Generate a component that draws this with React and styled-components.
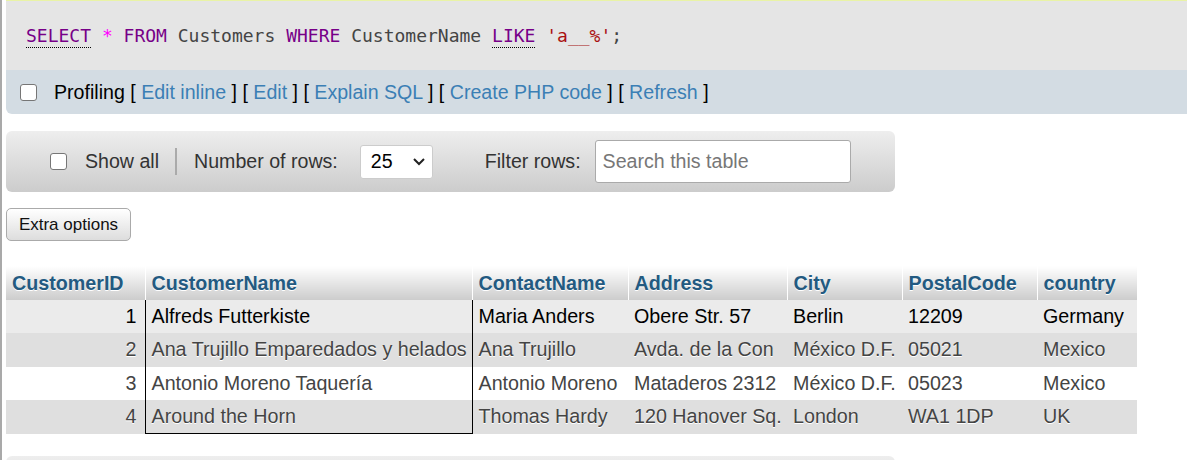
import React from "react";
import styled, { createGlobalStyle } from "styled-components";

const Global = createGlobalStyle`
  html, body { margin: 0; padding: 0; background: #fff; }
  body { font-family: "Liberation Sans", Arial, sans-serif; overflow: hidden; }
`;

const Page = styled.div`
  border-left: 2px solid #a9a9a9;
  padding-left: 4px;
  min-height: 100vh;
  box-sizing: border-box;
`;

const SqlBox = styled.div`
  background: #e5e5e5;
  border-top: 1px solid #e9f3a6;
  height: 69px;
  display: flex;
  align-items: center;
  padding-left: 20px;
  font-family: "DejaVu Sans Mono", monospace;
  font-size: 18px;
  color: #444;
`;

const Code = styled.code`
  font-family: inherit;
  white-space: pre;
`;

const Kw = styled.span`
  color: #770088;
  border-bottom: ${(p) => (p.$dotted ? "1px dotted #000" : "none")};
  padding-bottom: 1px;
`;
const Star = styled.span`color: #ff00ff;`;
const Str = styled.span`color: #aa1111;`;

const ProfileBar = styled.div`
  background: #d3dce3;
  height: 44px;
  display: flex;
  align-items: center;
  padding-left: 14px;
  border-bottom-left-radius: 6px;
  font-size: 19.6px;
  color: #000;
  gap: 17px;
`;

const Check = styled.span`
  display: inline-block;
  width: 15px;
  height: 15px;
  border: 1px solid #767676;
  border-radius: 3px;
  background: #fff;
  flex: none;
`;

const Link = styled.a`
  color: #3b7fb5;
  text-decoration: none;
`;

const NavBar = styled.div`
  margin-top: 17px;
  width: 889px;
  height: 61px;
  border-radius: 6px;
  background: linear-gradient(#eeeeee, #cccccc);
  display: flex;
  align-items: center;
  padding-left: 44px;
  box-sizing: border-box;
  font-size: 19.6px;
  color: #333;
`;

const ShowAll = styled.label`
  display: flex;
  align-items: center;
  gap: 18px;
  padding-right: 16px;
  border-right: 2px solid #aaa;
  line-height: 27px;
`;

const NavLabel = styled.span`
  margin-left: ${(p) => p.$ml}px;
`;

const Select = styled.div`
  margin-left: 22px;
  width: 73px;
  height: 34px;
  box-sizing: border-box;
  background: #fff;
  border: 1px solid #ccc;
  border-radius: 3px;
  display: flex;
  align-items: center;
  justify-content: space-between;
  padding: 0 6px 0 10px;
  color: #000;
  font-size: 19.6px;
`;

const Search = styled.input`
  margin-left: 14px;
  width: 256px;
  height: 43px;
  box-sizing: border-box;
  border: 1px solid #aaa;
  border-radius: 3px;
  padding: 0 7px;
  font-family: "Liberation Sans", Arial, sans-serif;
  font-size: 19.6px;
  color: #333;
  &::placeholder { color: #777; }
`;

const Button = styled.button`
  margin-top: 16px;
  display: block;
  width: 125px;
  height: 33px;
  box-sizing: border-box;
  border: 1px solid #aaa;
  border-radius: 5px;
  background: linear-gradient(#ffffff, #dddddd);
  font-family: "Liberation Sans", Arial, sans-serif;
  font-size: 17px;
  color: #111;
  padding: 0;
`;

const Table = styled.table`
  margin-top: 25px;
  border-collapse: collapse;
  table-layout: fixed;
  width: 1131px;
`;

const Th = styled.th`
  height: 34px;
  padding: 0 6px;
  text-align: left;
  font-size: 19.7px;
  font-weight: bold;
  color: #235a81;
  text-shadow: 0 1px 0 #fff;
  background: linear-gradient(#ffffff, #cccccc);
  border-left: ${(p) => (p.$first ? "none" : "1px solid #fff")};
  white-space: nowrap;
  overflow: hidden;
`;

const Tr = styled.tr`
  background: ${(p) => p.$bg};
  color: ${(p) => p.$color};
`;

const Td = styled.td`
  height: 33.25px;
  padding: 0 6px;
  font-size: 19.7px;
  text-shadow: ${(p) => (p.$shadow ? "0 1px 0 #fff" : "none")};
  white-space: nowrap;
  overflow: hidden;
  text-align: ${(p) => (p.$right ? "right" : "left")};
  padding-right: ${(p) => (p.$right ? "8px" : "6px")};
  border-left: ${(p) => (p.$boxed ? "1px solid #000" : "none")};
  border-right: ${(p) => (p.$boxed ? "1px solid #000" : "none")};
  border-bottom: ${(p) => (p.$boxed && p.$last ? "1px solid #000" : "none")};
`;

const BottomBar = styled.div`
  margin-top: 22px;
  width: 889px;
  height: 61px;
  border-radius: 6px;
  background: linear-gradient(#eeeeee, #cccccc);
`;

const cols = [139, 327, 156, 159, 115, 135, 100];
const heads = ["CustomerID", "CustomerName", "ContactName", "Address", "City", "PostalCode", "country"];
const rows = [
  ["1", "Alfreds Futterkiste", "Maria Anders", "Obere Str. 57", "Berlin", "12209", "Germany"],
  ["2", "Ana Trujillo Emparedados y helados", "Ana Trujillo", "Avda. de la Con", "México D.F.", "05021", "Mexico"],
  ["3", "Antonio Moreno Taquería", "Antonio Moreno", "Mataderos 2312", "México D.F.", "05023", "Mexico"],
  ["4", "Around the Horn", "Thomas Hardy", "120 Hanover Sq.", "London", "WA1 1DP", "UK"],
];
const rowStyle = [
  { bg: "#ebebeb", color: "#000", shadow: false },
  { bg: "#dfdfdf", color: "#444", shadow: true },
  { bg: "#ffffff", color: "#444", shadow: true },
  { bg: "#dfdfdf", color: "#444", shadow: true },
];

const Chevron = () => (
  <svg width="14" height="9" viewBox="0 0 14 9">
    <path d="M2 2 L7 7 L12 2" fill="none" stroke="#222" strokeWidth="2" />
  </svg>
);

export default function App() {
  return (
    <Page>
      <Global />
      <SqlBox>
        <Code>
          <Kw $dotted>SELECT</Kw>{" "}<Star>*</Star>{" "}<Kw>FROM</Kw>{" Customers "}<Kw>WHERE</Kw>{" CustomerName "}<Kw $dotted>LIKE</Kw>{" "}<Str>'a__%'</Str>;
        </Code>
      </SqlBox>
      <ProfileBar>
        <Check />
        <span>
          Profiling [ <Link>Edit inline</Link> ] [ <Link>Edit</Link> ] [ <Link>Explain SQL</Link> ] [ <Link>Create PHP code</Link> ] [ <Link>Refresh</Link> ]
        </span>
      </ProfileBar>
      <NavBar>
        <ShowAll>
          <Check />
          Show all
        </ShowAll>
        <NavLabel $ml={17}>Number of rows:</NavLabel>
        <Select>
          <span>25</span>
          <Chevron />
        </Select>
        <NavLabel $ml={52}>Filter rows:</NavLabel>
        <Search placeholder="Search this table" />
      </NavBar>
      <Button>Extra options</Button>
      <Table>
        <colgroup>
          {cols.map((w, i) => (
            <col key={i} style={{ width: w }} />
          ))}
        </colgroup>
        <thead>
          <tr>
            {heads.map((h, i) => (
              <Th key={h} $first={i === 0}>{h}</Th>
            ))}
          </tr>
        </thead>
        <tbody>
          {rows.map((r, ri) => (
            <Tr key={ri} $bg={rowStyle[ri].bg} $color={rowStyle[ri].color}>
              {r.map((c, ci) => (
                <Td
                  key={ci}
                  $right={ci === 0}
                  $boxed={ci === 1}
                  $last={ri === rows.length - 1}
                  $shadow={rowStyle[ri].shadow}
                >
                  {c}
                </Td>
              ))}
            </Tr>
          ))}
        </tbody>
      </Table>
      <BottomBar />
    </Page>
  );
}
